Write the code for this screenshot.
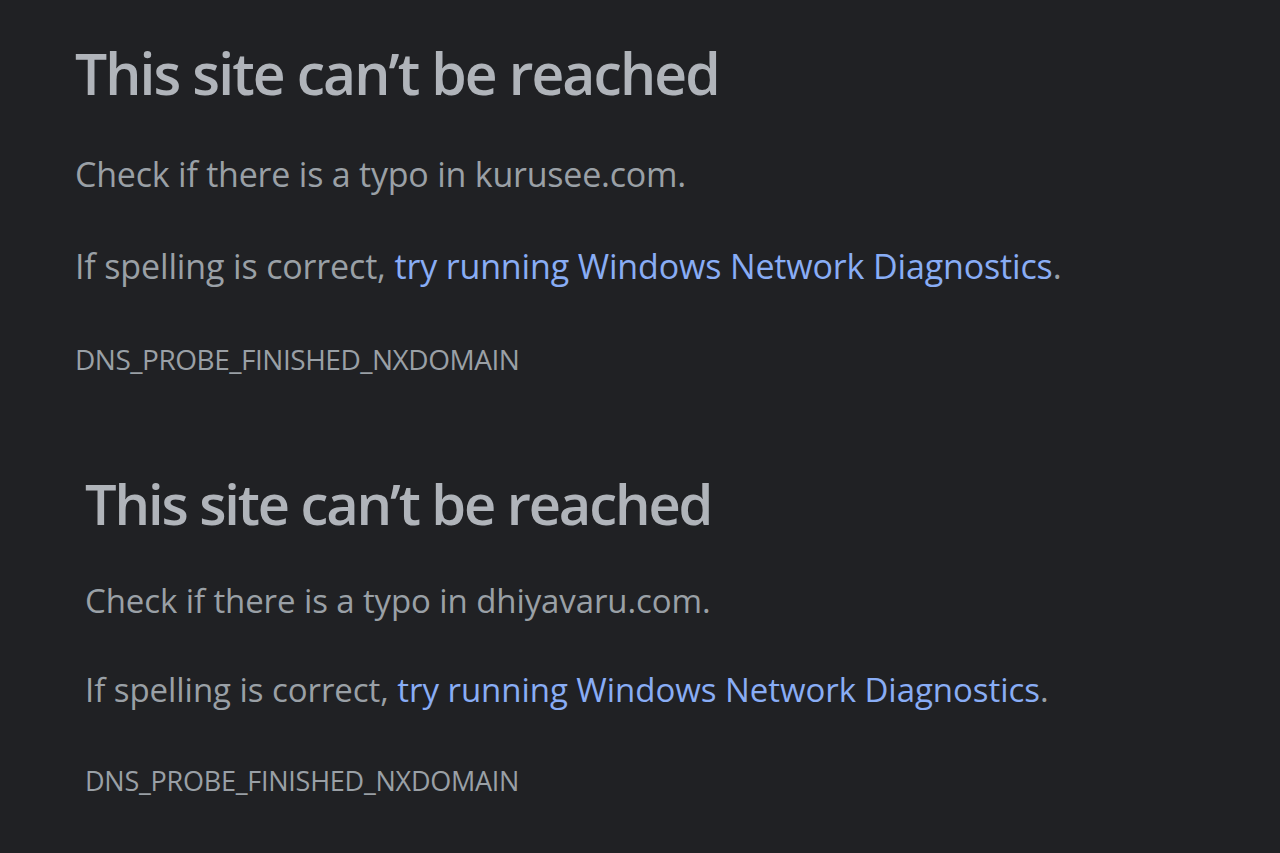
import React from "react";

function ErrorBlock({ domain, big }) {
  if (big) {
    return (
      <section className="pl-[75px]">
        <h1 className="mt-[39px] text-[57px] leading-[68px] font-semibold tracking-[-1.9px] text-[#b0b4ba]">
          This site can’t be reached
        </h1>
        <p className="mt-[47px] text-[34px] leading-[40px] tracking-[-0.22px] text-[#9aa0a6]">
          Check if there is a typo in {domain}.
        </p>
        <p className="mt-[52px] text-[34px] leading-[40px] tracking-[-0.15px] text-[#9aa0a6]">
          If spelling is correct, <a className="text-[#89adf5]">try running Windows Network Diagnostics</a>.
        </p>
        <div className="mt-[56px] text-[28px] leading-[34px] tracking-[-0.48px] text-[#9aa0a6]">
          DNS_PROBE_FINISHED_NXDOMAIN
        </div>
      </section>
    );
  }
  return (
    <section className="pl-[85px]">
      <h1 className="mt-[94px] text-[56px] leading-[67px] font-semibold tracking-[-2.1px] text-[#b0b4ba]">
        This site can’t be reached
      </h1>
      <p className="mt-[44px] text-[33px] leading-[40px] tracking-[-0.1px] text-[#9aa0a6]">
        Check if there is a typo in {domain}.
      </p>
      <p className="mt-[49px] text-[33px] leading-[40px] tracking-[-0.05px] text-[#9aa0a6]">
        If spelling is correct, <a className="text-[#89adf5]">try running Windows Network Diagnostics</a>.
      </p>
      <div className="mt-[54px] text-[27px] leading-[34px] tracking-[-0.25px] text-[#9aa0a6]">
        DNS_PROBE_FINISHED_NXDOMAIN
      </div>
    </section>
  );
}

export default function App() {
  return (
    <div className="min-h-screen bg-[#202124] flow-root font-['Open_Sans',sans-serif]">
      <ErrorBlock domain="kurusee.com" big />
      <ErrorBlock domain="dhiyavaru.com" />
    </div>
  );
}
